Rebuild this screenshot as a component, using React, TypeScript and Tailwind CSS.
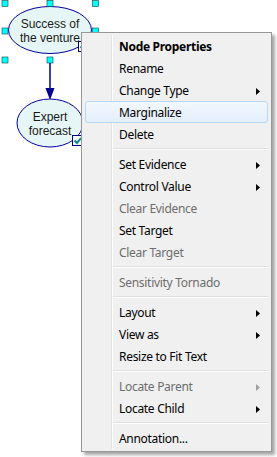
import React from "react";

type Item =
  | { kind: "item"; label: string; bold?: boolean; disabled?: boolean; sub?: boolean; hot?: boolean }
  | { kind: "sep" };

const MENU: Item[] = [
  { kind: "item", label: "Node Properties", bold: true },
  { kind: "item", label: "Rename" },
  { kind: "item", label: "Change Type", sub: true },
  { kind: "item", label: "Marginalize", hot: true },
  { kind: "item", label: "Delete" },
  { kind: "sep" },
  { kind: "item", label: "Set Evidence", sub: true },
  { kind: "item", label: "Control Value", sub: true },
  { kind: "item", label: "Clear Evidence", disabled: true },
  { kind: "item", label: "Set Target" },
  { kind: "item", label: "Clear Target", disabled: true },
  { kind: "sep" },
  { kind: "item", label: "Sensitivity Tornado", disabled: true },
  { kind: "sep" },
  { kind: "item", label: "Layout", sub: true },
  { kind: "item", label: "View as", sub: true },
  { kind: "item", label: "Resize to Fit Text" },
  { kind: "sep" },
  { kind: "item", label: "Locate Parent", disabled: true, sub: true },
  { kind: "item", label: "Locate Child", sub: true },
  { kind: "sep" },
  { kind: "item", label: "Annotation..." },
];

const NODE_FONT = "'Liberation Sans', Arial, sans-serif";

function Diagram() {
  const handles = [
    [5, 3.5], [50, 3.5], [95.5, 3.5],
    [5, 31], [95.5, 31],
    [5, 60], [50, 60], [95.5, 60],
  ];
  return (
    <svg width="110" height="160" viewBox="0 0 110 160" className="block">
      <line x1="50" y1="60" x2="50" y2="90" stroke="#000090" strokeWidth="1.5" />
      <polygon points="45.5,88 54.5,88 50,100" fill="#000090" />
      <ellipse cx="50" cy="30" rx="41.5" ry="23.5" fill="#e6f6f6" stroke="#0000a0" strokeWidth="1" />
      <ellipse cx="50" cy="123" rx="33" ry="24" fill="#e6f6f6" stroke="#0000a0" strokeWidth="1" />
      <text x="50" y="28" textAnchor="middle" fontFamily={NODE_FONT} fontSize="12" fill="#1a1a1a">Success of</text>
      <text x="50" y="42" textAnchor="middle" fontFamily={NODE_FONT} fontSize="12" fill="#1a1a1a">the venture</text>
      <text x="50" y="121" textAnchor="middle" fontFamily={NODE_FONT} fontSize="12" fill="#1a1a1a">Expert</text>
      <text x="50" y="135" textAnchor="middle" fontFamily={NODE_FONT} fontSize="12" fill="#1a1a1a">forecast</text>
      {[[78.5, 41.5], [72.5, 135.5]].map(([x, y], i) => (
        <g key={i}>
          <rect x={x} y={y} width="10" height="10" fill="#f4fafa" stroke="#000080" strokeWidth="1" />
          <path d={`M${x + 2} ${y + 5} L${x + 4.5} ${y + 7.5} L${x + 8.5} ${y + 2.5}`} fill="none" stroke="#008b8b" strokeWidth="2" />
        </g>
      ))}
      {handles.map(([x, y], i) => (
        <rect key={i} x={x - 3} y={y - 3} width="6" height="6" fill="#00ffff" stroke="#104050" strokeWidth="0.6" />
      ))}
    </svg>
  );
}

function Arrow({ disabled }: { disabled?: boolean }) {
  return (
    <svg width="4" height="7" viewBox="0 0 4 7" className="block">
      <polygon points="0,0 4,3.5 0,7" fill={disabled ? "#a0a0a0" : "#000"} />
    </svg>
  );
}

function Menu() {
  return (
    <div
      className="absolute left-[81px] top-[32px] w-[191px] border border-[#979797] bg-[#f0f0f0] px-[3px] py-[2px] shadow-[3px_3px_3px_rgba(0,0,0,0.35)] text-[12px] tracking-[-0.3px]"
      style={{ fontFamily: "'Noto Sans', 'Open Sans', sans-serif" }}
    >
      <div className="absolute left-[29px] top-[2px] bottom-[2px] w-px bg-[#e2e3e3]" />
      <div className="absolute left-[30px] top-[2px] bottom-[2px] w-px bg-white" />
      {MENU.map((it, i) =>
        it.kind === "sep" ? (
          <div key={i} className="h-[8px] ml-[28px] flex flex-col justify-center">
            <div className="h-px bg-[#e0e0e0]" />
            <div className="h-px bg-white" />
          </div>
        ) : (
          <div
            key={i}
            className={
              "relative h-[22px] flex items-center pt-[2px] pl-[33px] pr-[7px] rounded-[3px] border " +
              (it.hot
                ? "border-[#b8d6f6] bg-gradient-to-b from-[#f3f8fe] to-[#e3eefb]"
                : "border-transparent")
            }
          >
            <span
              className={
                "flex-1 leading-none " +
                (it.bold ? "font-bold " : "") +
                (it.disabled ? "text-[#6d6d6d]" : "text-black")
              }
            >
              {it.label}
            </span>
            {it.sub && <Arrow disabled={it.disabled} />}
          </div>
        )
      )}
    </div>
  );
}

export default function App() {
  return (
    <div className="relative w-[277px] h-[457px] bg-white overflow-hidden">
      <Diagram />
      <Menu />
    </div>
  );
}
